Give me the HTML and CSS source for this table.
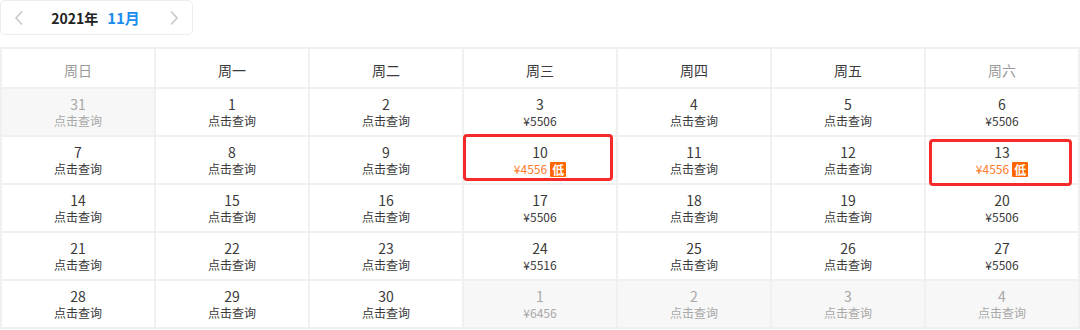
FILE: index.html
```html
<!DOCTYPE html>
<html lang="zh-CN">
<head>
<meta charset="utf-8">
<link rel="stylesheet" href="styles.css">
</head>
<body>
<div class="page">
  <div class="nav">
    <svg class="chev" width="10" height="16" viewBox="0 0 10 16"><path d="M8 1.5 L2 8 L8 14.5" fill="none" stroke="#c8c8c8" stroke-width="1.6"/></svg>
    <div class="title"><span class="year">2021年</span><span class="month">11月</span></div>
    <svg class="chev" width="10" height="16" viewBox="0 0 10 16"><path d="M2 1.5 L8 8 L2 14.5" fill="none" stroke="#c8c8c8" stroke-width="1.6"/></svg>
  </div>
  <div class="cal">
    <div class="hd weekend">周日</div><div class="hd">周一</div><div class="hd">周二</div><div class="hd">周三</div><div class="hd">周四</div><div class="hd">周五</div><div class="hd weekend">周六</div>

    <div class="cell off"><span class="d">31</span><span class="s">点击查询</span></div>
    <div class="cell"><span class="d">1</span><span class="s">点击查询</span></div>
    <div class="cell"><span class="d">2</span><span class="s">点击查询</span></div>
    <div class="cell"><span class="d">3</span><span class="p">¥5506</span></div>
    <div class="cell"><span class="d">4</span><span class="s">点击查询</span></div>
    <div class="cell"><span class="d">5</span><span class="s">点击查询</span></div>
    <div class="cell"><span class="d">6</span><span class="p">¥5506</span></div>

    <div class="cell"><span class="d">7</span><span class="s">点击查询</span></div>
    <div class="cell"><span class="d">8</span><span class="s">点击查询</span></div>
    <div class="cell"><span class="d">9</span><span class="s">点击查询</span></div>
    <div class="cell"><span class="d">10</span><span class="p low">¥4556<i class="badge">低</i></span></div>
    <div class="cell"><span class="d">11</span><span class="s">点击查询</span></div>
    <div class="cell"><span class="d">12</span><span class="s">点击查询</span></div>
    <div class="cell"><span class="d">13</span><span class="p low">¥4556<i class="badge">低</i></span></div>

    <div class="cell"><span class="d">14</span><span class="s">点击查询</span></div>
    <div class="cell"><span class="d">15</span><span class="s">点击查询</span></div>
    <div class="cell"><span class="d">16</span><span class="s">点击查询</span></div>
    <div class="cell"><span class="d">17</span><span class="p">¥5506</span></div>
    <div class="cell"><span class="d">18</span><span class="s">点击查询</span></div>
    <div class="cell"><span class="d">19</span><span class="s">点击查询</span></div>
    <div class="cell"><span class="d">20</span><span class="p">¥5506</span></div>

    <div class="cell"><span class="d">21</span><span class="s">点击查询</span></div>
    <div class="cell"><span class="d">22</span><span class="s">点击查询</span></div>
    <div class="cell"><span class="d">23</span><span class="s">点击查询</span></div>
    <div class="cell"><span class="d">24</span><span class="p">¥5516</span></div>
    <div class="cell"><span class="d">25</span><span class="s">点击查询</span></div>
    <div class="cell"><span class="d">26</span><span class="s">点击查询</span></div>
    <div class="cell"><span class="d">27</span><span class="p">¥5506</span></div>

    <div class="cell"><span class="d">28</span><span class="s">点击查询</span></div>
    <div class="cell"><span class="d">29</span><span class="s">点击查询</span></div>
    <div class="cell"><span class="d">30</span><span class="s">点击查询</span></div>
    <div class="cell off"><span class="d">1</span><span class="p">¥6456</span></div>
    <div class="cell off"><span class="d">2</span><span class="s">点击查询</span></div>
    <div class="cell off"><span class="d">3</span><span class="s">点击查询</span></div>
    <div class="cell off"><span class="d">4</span><span class="s">点击查询</span></div>
  </div>
  <div class="mark mark-a"></div>
  <div class="mark mark-b"></div>
</div>
</body>
</html>
```
FILE: styles.css
```css
* { box-sizing: border-box; }
html, body { margin: 0; padding: 0; background: #fff; }
body {
  font-family: "Noto Sans CJK SC", "Noto Sans", sans-serif;
  color: #333;
  width: 1080px;
  height: 330px;
  overflow: hidden;
}
.page { position: relative; }
.nav {
  width: 193px;
  height: 35px;
  border: 1px solid #ececec;
  border-radius: 5px;
  display: flex;
  align-items: center;
  justify-content: space-between;
  padding: 0 13px 0 13px;
  margin-bottom: 12px;
}
.chev { display: block; }
.title { display: flex; align-items: center; gap: 9px; font-size: 14px; font-weight: 700; line-height: 20px; padding-right: 2px; }
.year { color: #222; }
.month { color: #1a8cf0; font-size: 15px; }
.cal {
  display: grid;
  grid-template-columns: repeat(7, 1fr);
  grid-template-rows: 38px repeat(5, 46px);
  gap: 2px;
  padding: 2px;
  background: #f0f0f0;
  width: 1080px;
}
.hd {
  background: #fff;
  display: flex;
  align-items: center;
  justify-content: center;
  font-size: 14px;
  color: #3a3a3a;
  padding-top: 4px;
}
.hd.weekend { color: #999; }
.cell {
  background: #fff;
  display: flex;
  flex-direction: column;
  align-items: center;
  justify-content: center;
  padding-top: 1px;
}
.cell.off { background: #f7f7f7; }
.d { font-size: 14px; line-height: 17px; color: #3a3a3a; }
.s { font-size: 12px; line-height: 16px; color: #3a3a3a; }
.p { font-size: 12px; line-height: 16px; color: #3a3a3a; display: flex; align-items: center; }
.off .d, .off .s, .off .p { color: #a8a8a8; }
.p.low { color: #ff7a2a; }
.badge {
  font-style: normal;
  background: #ff6600;
  color: #fff;
  font-size: 12px;
  font-weight: 700;
  line-height: 15px;
  padding: 0 2px;
  margin-left: 3px;
  border-radius: 1px;
}
.mark {
  position: absolute;
  border: 3px solid #f52a2a;
  border-radius: 4px;
}
.mark-a { left: 463px; top: 134px; width: 150px; height: 47px; }
.mark-b { left: 929px; top: 139px; width: 143px; height: 47px; }
```
